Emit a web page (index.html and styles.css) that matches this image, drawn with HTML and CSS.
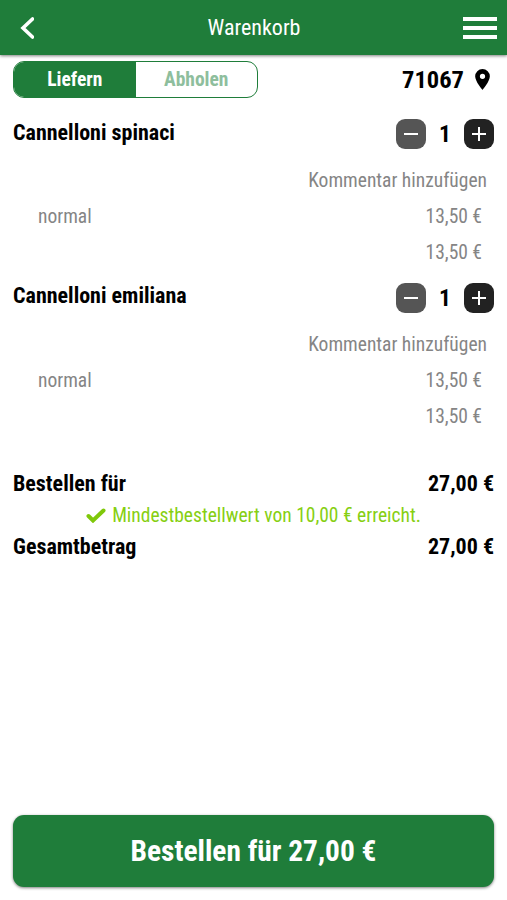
FILE: index.html
```html
<!DOCTYPE html>
<html lang="de">

<head>
  <meta charset="UTF-8" />
  <meta name="viewport" content="width=device-width, initial-scale=1.0" />
  <title>Warenkorb</title>
  <link rel="stylesheet" href="styles.css">
</head>

<body>
  <header>
    <svg class="back" viewBox="0 0 14 22"><path d="M12.500 2 L3 11 L12.500 20" /></svg>
    <h1>Warenkorb</h1>
    <div class="menu"><span></span><span></span><span></span></div>
  </header>

  <main>
    <div class="top-row">
      <div class="switch">
        <div class="tab active"><span>Liefern</span></div>
        <div class="tab"><span>Abholen</span></div>
      </div>
      <div class="location">
        <span>71067</span>
        <svg viewBox="0 0 14 20"><path fill-rule="evenodd" d="M7 0a7 7 0 0 0-7 7c0 5 7 13 7 13s7-8 7-13a7 7 0 0 0-7-7zM7 4.500a2.500 2.500 0 1 1 0 5 2.500 2.500 0 0 1 0-5z" /></svg>
      </div>
    </div>

    <div class="item">
      <div class="item-head">
        <h2>Cannelloni spinaci</h2>
        <div class="counter">
          <button class="minus"><svg viewBox="0 0 14 14"><path d="M0 7h14" /></svg></button>
          <span>1</span>
          <button><svg viewBox="0 0 14 14"><path d="M0 7h14M7 0v14" /></svg></button>
        </div>
      </div>
      <div class="comment"><span>Kommentar hinzufügen</span></div>
      <div class="line"><span>normal</span><span>13,50 €</span></div>
      <div class="line sum"><span>13,50 €</span></div>
    </div>

    <div class="item">
      <div class="item-head">
        <h2>Cannelloni emiliana</h2>
        <div class="counter">
          <button class="minus"><svg viewBox="0 0 14 14"><path d="M0 7h14" /></svg></button>
          <span>1</span>
          <button><svg viewBox="0 0 14 14"><path d="M0 7h14M7 0v14" /></svg></button>
        </div>
      </div>
      <div class="comment"><span>Kommentar hinzufügen</span></div>
      <div class="line"><span>normal</span><span>13,50 €</span></div>
      <div class="line sum"><span>13,50 €</span></div>
    </div>

    <div class="totals">
      <div class="total"><span>Bestellen für</span><span>27,00 €</span></div>
      <div class="notice">
        <svg viewBox="0 0 20 15"><path d="M2.500 8l4.500 4.500L17.500 2.500" /></svg>
        <span>Mindestbestellwert von 10,00 € erreicht.</span>
      </div>
      <div class="total"><span>Gesamtbetrag</span><span>27,00 €</span></div>
    </div>
  </main>

  <footer>
    <button class="order"><span>Bestellen für 27,00 €</span></button>
  </footer>
</body>

</html>
```
FILE: styles.css
```css
* {
  box-sizing: border-box;
  font-family: "Roboto Condensed", Roboto, sans-serif;
  font-stretch: 75%;
}

body {
  margin: 0;
  height: 900px;
  display: flex;
  flex-direction: column;
  background-color: #fff;
  color: #000;
}

h1,
h2 {
  margin: 0;
}

button {
  padding: 0;
  border: none;
  cursor: pointer;
}

header {
  height: 55px;
  padding: 0 10px 0 20px;
  display: grid;
  grid-template-columns: 34px 1fr 34px;
  align-items: center;
  background-color: #1f7d3a;
  color: #fff;
  box-shadow: 0 1px 3px rgba(0, 0, 0, 0.5);
}

h1 {
  padding-right: 9px;
  text-align: center;
  font-size: 22px;
  font-weight: 400;
}

.back {
  width: 14px;
  height: 22px;
  fill: none;
  stroke: #fff;
  stroke-width: 3.6;
  stroke-linecap: round;
}

.menu {
  display: grid;
  gap: 5px;
}

.menu span {
  height: 4px;
  background-color: #fff;
}

main {
  flex: 1;
  padding: 6px 13px 0;
}

.top-row {
  height: 36px;
  display: flex;
  justify-content: space-between;
  align-items: center;
}

.switch {
  width: 245px;
  height: 37px;
  display: flex;
  border: 1px solid #1f7d3a;
  border-radius: 11px;
  overflow: hidden;
}

.tab {
  flex: 1;
  display: flex;
  align-items: center;
  justify-content: center;
  font-size: 19.5px;
  font-weight: 700;
  color: #8ebe9d;
}

.tab.active {
  background-color: #1f7d3a;
  color: #fff;
}

.location {
  display: flex;
  align-items: center;
  gap: 11px;
  padding-right: 4px;
  font-size: 24.5px;
  font-weight: 700;
}

.location svg {
  width: 15px;
  height: 21px;
}

.item {
  height: 163.5px;
  padding-top: 21px;
}

.item-head {
  height: 32px;
  display: flex;
  justify-content: space-between;
  align-items: center;
}

h2 {
  padding-bottom: 4px;
  font-size: 22px;
  font-weight: 700;
}

.counter {
  display: flex;
  align-items: center;
  font-size: 23.5px;
  font-weight: 700;
}

.counter span {
  width: 38px;
  text-align: center;
}

.counter button {
  width: 30px;
  height: 30px;
  display: flex;
  align-items: center;
  justify-content: center;
  border-radius: 9px;
  background-color: #222;
}

.counter .minus {
  background-color: #555;
}

.counter svg {
  width: 14px;
  height: 14px;
  stroke: #fff;
  stroke-width: 2;
}

.comment,
.line {
  height: 36px;
  display: flex;
  align-items: center;
  justify-content: space-between;
  padding: 0 12px 0 25px;
  font-size: 19.5px;
  color: #858585;
}

.comment {
  padding-right: 7px;
  margin-top: 12.5px;
}

.comment,
.sum {
  justify-content: flex-end;
}

.totals {
  padding-top: 44px;
}

.total {
  height: 31px;
  display: flex;
  align-items: center;
  justify-content: space-between;
  font-size: 22px;
  font-weight: 700;
}

.notice {
  height: 32px;
  display: flex;
  align-items: center;
  justify-content: center;
  gap: 6px;
  font-size: 19.5px;
  color: #86cf12;
}

.notice svg {
  width: 20px;
  height: 15px;
  fill: none;
  stroke: #7fc80a;
  stroke-width: 4;
  stroke-linecap: round;
}

footer {
  padding: 0 13px 13px;
}

.order {
  width: 100%;
  height: 72px;
  border-radius: 11px;
  background-color: #1f7d3a;
  color: #fff;
  font-size: 29.4px;
  font-weight: 700;
  box-shadow: 0 1px 3px rgba(0, 0, 0, 0.5);
}
```
